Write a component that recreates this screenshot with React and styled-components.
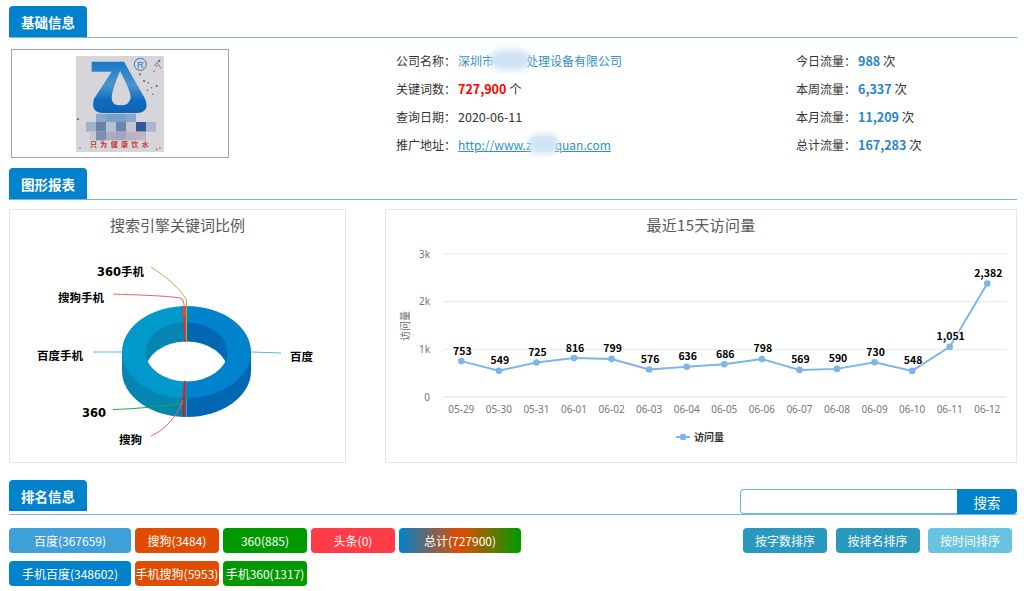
import React from "react";
import styled, { createGlobalStyle } from "styled-components";

const Global = createGlobalStyle`
  html, body { margin: 0; padding: 0; background: #fff; }
  body { font-family: "Noto Sans CJK SC", "Liberation Sans", sans-serif; color: #333; }
  * { box-sizing: border-box; }
`;

const Page = styled.div`
  width: 1008px;
  margin-left: 9px;
  padding-top: 6px;
`;

const SectionHead = styled.div`
  display: flex;
  justify-content: space-between;
  align-items: ${p => (p.$tall ? "flex-start" : "flex-end")};
  height: ${p => (p.$tall ? "35px" : "32px")};
  margin-top: ${p => p.$top || 0}px;
  border-bottom: 1px solid #6fb8e8;
`;

const Tab = styled.h2`
  width: 78px;
  height: 31px;
  margin: 0;
  background: #0082cc;
  border-radius: 4px 4px 0 0;
  color: #fff;
  font-size: 13.5px;
  font-weight: 700;
  line-height: 32px;
  text-align: center;
`;

const SearchBar = styled.form`
  display: flex;
  width: 277px;
  height: 25px;
  margin: 9px 0 0;
`;

const SearchInput = styled.input`
  flex: 1;
  min-width: 0;
  height: 25px;
  border: 1px solid #6db3e3;
  border-right: 0;
  border-radius: 4px 0 0 4px;
  outline: 0;
  background: #fff;
`;

const SearchButton = styled.button`
  width: 60px;
  height: 25px;
  padding: 0;
  border: 0;
  border-radius: 0 4px 4px 0;
  background: #0082cc;
  color: #fff;
  font: 13.5px "Noto Sans CJK SC", sans-serif;
`;

const InfoRow = styled.div`
  display: flex;
  margin-top: 8px;
  height: 113px;
`;

const LogoBox = styled.div`
  display: flex;
  justify-content: center;
  align-items: center;
  width: 218px;
  height: 109px;
  margin: 3px 0 0 2px;
  border: 1px solid #a3a3a3;
`;

const InfoColumn = styled.dl`
  margin: 0 0 0 ${p => p.$left}px;
  width: ${p => p.$width}px;
`;

const InfoLine = styled.div`
  display: flex;
  align-items: center;
  height: 28px;
  font-size: 12.5px;
  color: #333;
`;

const InfoLabel = styled.dt`
  width: 62px;
  font-size: 12px;
`;

const InfoValue = styled.dd`
  margin: 0;
  white-space: nowrap;
`;

const Link = styled.a`
  color: #2f8fd0;
  font-size: 12px;
  text-decoration: ${p => (p.$under ? "underline" : "none")};
`;

const Strong = styled.b`
  color: ${p => p.$color};
  font-weight: 700;
`;

const Masked = styled.span`
  display: inline-block;
  position: relative;
  width: ${p => p.$w}px;
  height: 12px;
  &::after {
    content: "";
    position: absolute;
    left: -4px;
    right: -4px;
    top: -4px;
    bottom: -4px;
    border-radius: 10px;
    background: #cfe3f4;
    filter: blur(3px);
  }
`;

const ChartRow = styled.div`
  display: flex;
  justify-content: space-between;
  margin-top: 9px;
`;

const Panel = styled.section`
  display: flex;
  flex-direction: column;
  width: ${p => p.$w}px;
  height: 254px;
  border: 1px solid #e6e6e6;
`;

const ChartTitle = styled.h3`
  height: 30px;
  margin: 0;
  color: #595959;
  font-size: 15px;
  font-weight: 400;
  line-height: 30px;
  text-align: center;
  letter-spacing: ${p => p.$spread || 0}px;
`;

const Plot = styled.svg`
  display: block;
  flex: 1;
  width: 100%;
  height: 222px;
`;

const PieLabel = styled.text`
  font-family: "DejaVu Sans", "Noto Sans CJK SC", sans-serif;
  font-size: 11.5px;
  font-weight: 700;
  fill: #000;
`;

const PointLabel = styled.text`
  font-family: "Noto Sans CJK SC", sans-serif;
  font-size: 10.5px;
  font-weight: 700;
  fill: #000;
  text-anchor: middle;
  paint-order: stroke;
  stroke: #fff;
  stroke-width: 1.5px;
`;

const AxisLabel = styled.text`
  font-family: "Noto Sans", sans-serif;
  font-size: 10px;
  fill: #777;
  text-anchor: ${p => p.$anchor || "middle"};
`;

const AxisTitle = styled.text`
  font-family: "Noto Sans CJK SC", sans-serif;
  font-size: 10px;
  fill: #666;
  text-anchor: middle;
`;

const LegendLabel = styled.text`
  font-family: "Noto Sans CJK SC", sans-serif;
  font-size: 10px;
  font-weight: 700;
  fill: #333;
`;

const StampText = styled.text`
  font-family: "Noto Sans CJK SC", sans-serif;
  font-size: 21px;
  font-weight: 700;
  fill: #c8322f;
  letter-spacing: 10px;
`;

const Mark = styled.text`
  font-family: "Liberation Sans", sans-serif;
  font-size: 28px;
  fill: #2e7cc0;
`;

const RankArea = styled.div`
  display: flex;
  justify-content: space-between;
  margin-top: 13px;
`;

const ChipGrid = styled.div`
  display: grid;
  grid-template-columns: 122px 84px 84px 84px 122px;
  grid-auto-rows: 25px;
  gap: 8px 4px;
`;

const Chip = styled.button`
  padding: 0;
  border: 0;
  border-radius: 4px;
  background: ${p => p.$bg};
  color: #fff;
  font: 12px/25px "Noto Sans CJK SC", sans-serif;
  white-space: nowrap;
`;

const SortGroup = styled.div`
  display: flex;
  gap: 8.5px;
  margin-right: 5px;
  align-items: flex-start;
`;

const SortButton = styled.button`
  width: 84px;
  height: 25px;
  padding: 0;
  border: 0;
  border-radius: 4px;
  background: ${p => (p.$active ? "#67c3e0" : "#2a99bd")};
  color: #fff;
  font: 12px "Noto Sans CJK SC", sans-serif;
`;

function Logo() {
  const rows = [
    { y: 333, h: 25, cells: [[288, "#8fa8c9"], [318, "#7d9fc5"], [348, "#7ba0c6"], [378, "#8ba7c8"]] },
    { y: 358, h: 29, cells: [[258, "#a2b1ca"], [288, "#6a82ab"], [318, "#b9c0d0"], [348, "#6d85ae"], [378, "#c0c6d3"], [408, "#30589a"], [438, "#aab6cc"]] },
    { y: 387, h: 26, cells: [[268, "#c6c8d2"], [288, "#7a8eb0"], [318, "#a8aec2"], [348, "#a7a4bb"], [378, "#bbb0c0"], [408, "#bcb8c4"]] },
  ];
  const specks = [[432, 235], [445, 240], [455, 255], [470, 250], [442, 262], [458, 275], [420, 215], [470, 190], [462, 205], [478, 175], [240, 435], [480, 436], [234, 350], [470, 440]];
  return (
    <svg width="88" height="96" viewBox="228 160 264 288" role="img" aria-label="logo">
      <defs>
        <linearGradient id="logoBlue" x1="0" y1="0" x2="0" y2="1">
          <stop offset="0" stopColor="#1678c4" />
          <stop offset="0.45" stopColor="#4a94d0" />
          <stop offset="0.75" stopColor="#0f6cbe" />
          <stop offset="1" stopColor="#0b64b4" />
        </linearGradient>
      </defs>
      <rect x="228" y="160" width="264" height="288" rx="3" fill="#d6d6da" />
      <path
        fillRule="evenodd"
        fill="url(#logoBlue)"
        d="M275 177 L372 177 L436 290 Q450 330 410 331 L310 331 Q270 330 282 288 L335 207 L275 207 Z M360 205 Q392 265 392 285 Q388 308 362 308 Q335 308 335 285 Q335 265 360 205 Z"
      />
      <circle cx="421" cy="185" r="18" fill="none" stroke="#2e7cc0" strokeWidth="3" />
      <Mark x="411" y="195">R</Mark>
      {specks.map(([x, y], i) => (
        <circle key={i} cx={x} cy={y} r={i % 3 === 0 ? 3 : 2.2} fill="#5d5d62" />
      ))}
      <path d="M462 190 L480 170 M470 178 L484 198" stroke="#77777c" strokeWidth="2.5" fill="none" />
      {rows.map(r =>
        r.cells.map(([x, c]) => <rect key={`${r.y}-${x}`} x={x} y={r.y} width="30" height={r.h} fill={c} />)
      )}
      <StampText x="270" y="434">只为健康饮水</StampText>
    </svg>
  );
}

function Donut() {
  const cx = 186.5, cy = 352, rx = 64.5, ry = 46, ix = 41, iy = 29.5, d = 19;
  const top = cy - ry, bot = cy + ry;
  return (
    <Plot viewBox="10 240 335 222">
      <defs>
        <clipPath id="holeClip">
          <ellipse cx={cx} cy={cy + d} rx={ix} ry={iy} />
        </clipPath>
      </defs>
      {/* outer wall */}
      <path fill="#0585b2" d={`M${cx - rx} ${cy} V${cy + d} A${rx} ${ry} 0 0 0 ${cx} ${bot + d} V${cy} Z`} />
      <path fill="#0067b2" d={`M${cx + rx} ${cy} V${cy + d} A${rx} ${ry} 0 0 1 ${cx} ${bot + d} V${cy} Z`} />
      {/* top face */}
      <path fill="#0099cc" d={`M${cx} ${top} A${rx} ${ry} 0 0 0 ${cx} ${bot} Z`} />
      <path fill="#0082cc" d={`M${cx} ${top} A${rx} ${ry} 0 0 1 ${cx} ${bot} Z`} />
      {/* inner wall */}
      <path fill="#0585b2" d={`M${cx} ${cy - iy} A${ix} ${iy} 0 0 0 ${cx} ${cy + iy} Z`} />
      <path fill="#0067b2" d={`M${cx} ${cy - iy} A${ix} ${iy} 0 0 1 ${cx} ${cy + iy} Z`} />
      {/* hole: where the inner rim and its lowered copy overlap */}
      <ellipse cx={cx} cy={cy} rx={ix} ry={iy} fill="#fff" clipPath="url(#holeClip)" />
      {/* small slices */}
      <path fill="#ee2a2a" d="M182.4 306 L186 306 L186 342 L184.6 342 Z" />
      <path fill="#8cc63f" d="M185.8 306 L187 306 L187 342 L186 342 Z" />
      <path fill="#e02020" d="M184 381 L186 381 L185 398 L182.6 398 Z" />
      <path fill="#c8201f" d="M182.6 398 L185 398 L185 417 L182.6 417 Z" />
      {/* leader lines */}
      <g fill="none" strokeWidth="1">
        <path stroke="#8cc63f" d="M151 267 C165 276 180 288 186.5 300 V316" />
        <path stroke="#ff5a5a" d="M113 294 C135 295 165 295.5 180 298 Q184 299 184 304 V316" />
        <path stroke="#5fb6e6" d="M93 352 H122" />
        <path stroke="#5fb6e6" d="M251 352 L281 353" />
        <path stroke="#22aa33" d="M113 409.5 C135 409 165 406 183 403" />
        <path stroke="#ff5a5a" d="M151 436 C165 430 178 415 183 400" />
      </g>
      <PieLabel x="97" y="276">360手机</PieLabel>
      <PieLabel x="58" y="302">搜狗手机</PieLabel>
      <PieLabel x="37" y="360">百度手机</PieLabel>
      <PieLabel x="290" y="361">百度</PieLabel>
      <PieLabel x="82" y="417">360</PieLabel>
      <PieLabel x="119" y="444">搜狗</PieLabel>
    </Plot>
  );
}

const visits = [
  ["05-29", 753], ["05-30", 549], ["05-31", 725], ["06-01", 816], ["06-02", 799],
  ["06-03", 576], ["06-04", 636], ["06-05", 686], ["06-06", 798], ["06-07", 569],
  ["06-08", 590], ["06-09", 730], ["06-10", 548], ["06-11", 1051], ["06-12", 2382],
];

function LineChart() {
  const px = i => 461.3 + i * 37.57;
  const py = v => 397 - (v * 143) / 3000;
  const pts = visits.map(([, v], i) => `${px(i)},${py(v)}`).join(" ");
  return (
    <Plot viewBox="386 240 630 222">
      {[1000, 2000, 3000].map(v => (
        <line key={v} x1="443" x2="1006.5" y1={py(v)} y2={py(v)} stroke="#e6e9f0" />
      ))}
      <line x1="443" x2="1006.5" y1="397" y2="397" stroke="#d6ddef" />
      {["0", "1k", "2k", "3k"].map((t, i) => (
        <AxisLabel key={t} x="430" y={py(i * 1000) + 3.5} $anchor="end">{t}</AxisLabel>
      ))}
      <AxisTitle transform="translate(409 326) rotate(-90)">访问量</AxisTitle>
      <polyline points={pts} fill="none" stroke="#7cb5ec" strokeWidth="2" />
      {visits.map(([d, v], i) => (
        <g key={d}>
          <circle cx={px(i)} cy={py(v)} r="3.3" fill="#7cb5ec" />
          <PointLabel x={px(i) + 1} y={py(v) - 6.5}>{v.toLocaleString("en-US")}</PointLabel>
          <AxisLabel x={px(i)} y="412.5">{d}</AxisLabel>
        </g>
      ))}
      <line x1="676" x2="690" y1="437" y2="437" stroke="#7cb5ec" strokeWidth="2" />
      <circle cx="683" cy="437" r="3.3" fill="#7cb5ec" />
      <LegendLabel x="694" y="441">访问量</LegendLabel>
    </Plot>
  );
}

const chips = [
  ["百度(367659)", "#3fa0d9"],
  ["搜狗(3484)", "#e04c00"],
  ["360(885)", "#009900"],
  ["头条(0)", "#ff3b47"],
  ["总计(727900)", "linear-gradient(to right, #0082cc, #e04c00 50%, #009900)"],
  ["手机百度(348602)", "#0082cc"],
  ["手机搜狗(5953)", "#e04c00"],
  ["手机360(1317)", "#009900"],
];

export default function App() {
  return (
    <Page>
      <Global />
      <SectionHead>
        <Tab>基础信息</Tab>
      </SectionHead>
      <InfoRow>
        <LogoBox><Logo /></LogoBox>
        <InfoColumn $left={167} $width={400}>
          <InfoLine>
            <InfoLabel>公司名称：</InfoLabel>
            <InfoValue><Link href="#">深圳市<Masked $w={32} />处理设备有限公司</Link></InfoValue>
          </InfoLine>
          <InfoLine>
            <InfoLabel>关键词数：</InfoLabel>
            <InfoValue><Strong $color="#f00">727,900</Strong> 个</InfoValue>
          </InfoLine>
          <InfoLine>
            <InfoLabel>查询日期：</InfoLabel>
            <InfoValue>2020-06-11</InfoValue>
          </InfoLine>
          <InfoLine>
            <InfoLabel>推广地址：</InfoLabel>
            <InfoValue><Link href="#" $under>http://www.z<Masked $w={23} />quan.com</Link></InfoValue>
          </InfoLine>
        </InfoColumn>
        <InfoColumn $left={0} $width={200}>
          <InfoLine>
            <InfoLabel>今日流量：</InfoLabel>
            <InfoValue><Strong $color="#2b84c6">988</Strong> 次</InfoValue>
          </InfoLine>
          <InfoLine>
            <InfoLabel>本周流量：</InfoLabel>
            <InfoValue><Strong $color="#2b84c6">6,337</Strong> 次</InfoValue>
          </InfoLine>
          <InfoLine>
            <InfoLabel>本月流量：</InfoLabel>
            <InfoValue><Strong $color="#2b84c6">11,209</Strong> 次</InfoValue>
          </InfoLine>
          <InfoLine>
            <InfoLabel>总计流量：</InfoLabel>
            <InfoValue><Strong $color="#2b84c6">167,283</Strong> 次</InfoValue>
          </InfoLine>
        </InfoColumn>
      </InfoRow>

      <SectionHead $top={9}>
        <Tab>图形报表</Tab>
      </SectionHead>
      <ChartRow>
        <Panel $w={337}>
          <ChartTitle>搜索引擎关键词比例</ChartTitle>
          <Donut />
        </Panel>
        <Panel $w={632}>
          <ChartTitle $spread={0.3}>最近15天访问量</ChartTitle>
          <LineChart />
        </Panel>
      </ChartRow>

      <SectionHead $top={17} $tall>
        <Tab>排名信息</Tab>
        <SearchBar onSubmit={e => e.preventDefault()}>
          <SearchInput type="text" />
          <SearchButton type="submit">搜索</SearchButton>
        </SearchBar>
      </SectionHead>
      <RankArea>
        <ChipGrid>
          {chips.map(([t, bg]) => (
            <Chip key={t} $bg={bg}>{t}</Chip>
          ))}
        </ChipGrid>
        <SortGroup>
          <SortButton>按字数排序</SortButton>
          <SortButton>按排名排序</SortButton>
          <SortButton $active>按时间排序</SortButton>
        </SortGroup>
      </RankArea>
    </Page>
  );
}
